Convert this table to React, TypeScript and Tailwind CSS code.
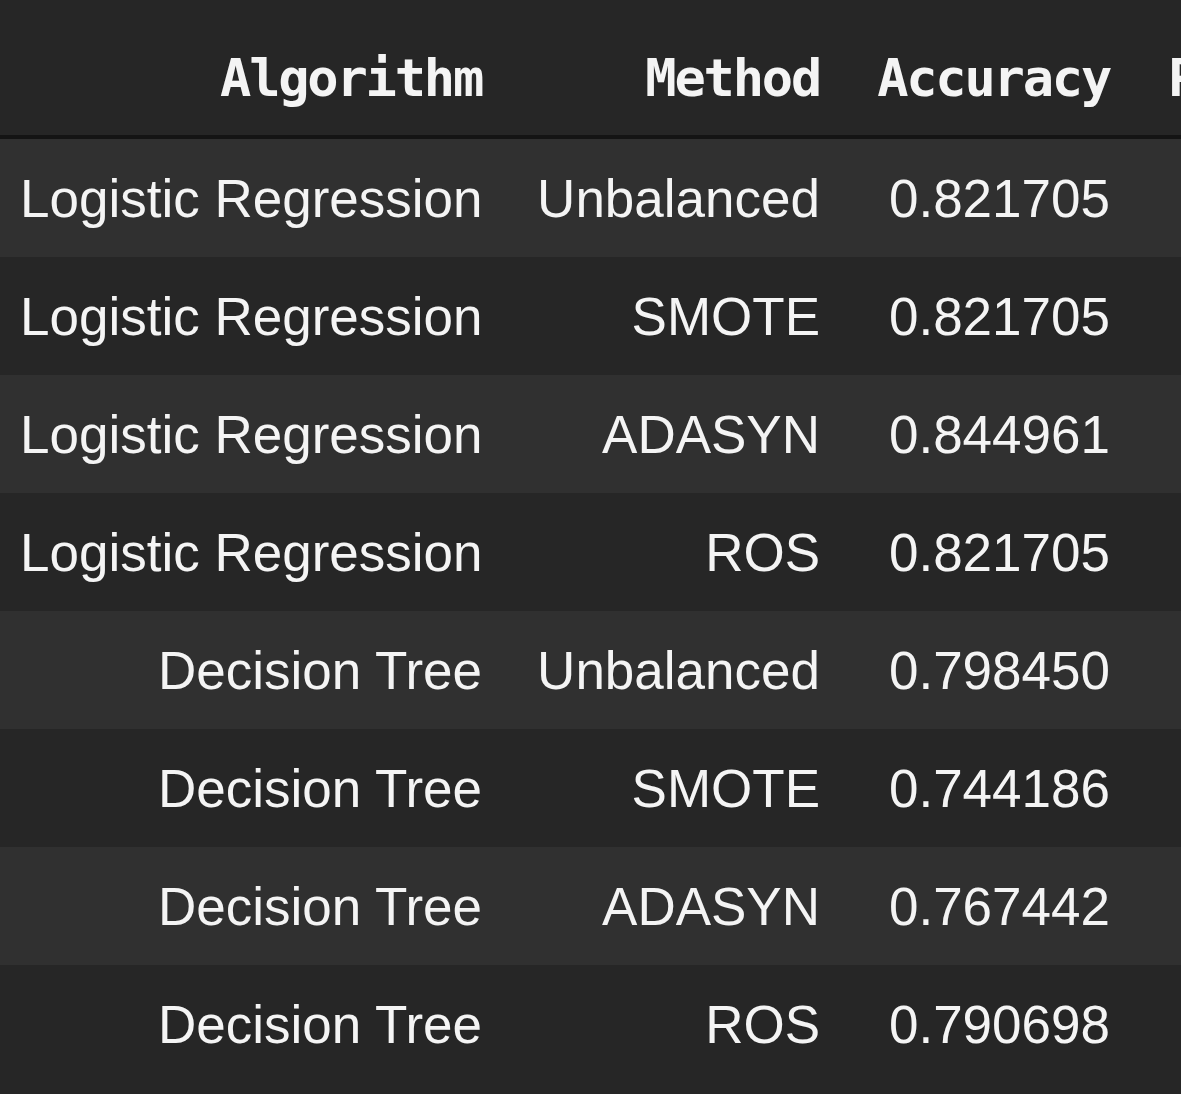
const rows = [
  ["Logistic Regression", "Unbalanced", "0.821705"],
  ["Logistic Regression", "SMOTE", "0.821705"],
  ["Logistic Regression", "ADASYN", "0.844961"],
  ["Logistic Regression", "ROS", "0.821705"],
  ["Decision Tree", "Unbalanced", "0.798450"],
  ["Decision Tree", "SMOTE", "0.744186"],
  ["Decision Tree", "ADASYN", "0.767442"],
  ["Decision Tree", "ROS", "0.790698"],
];

const headers = ["Algorithm", "Method", "Accuracy", "Precision"];

export default function App() {
  return (
    <div className="h-[1094px] w-[1181px] overflow-hidden bg-[#262626] text-[#f4f4f4]">
      {/* header */}
      <div className="grid h-[139px] w-max grid-cols-[509px_338px_290px_320px] border-b-4 border-[#141414]">
        {headers.map((h) => (
          <div
            key={h}
            className="pl-[28px] pr-[27px] pt-[52px] text-right font-['DejaVu_Sans_Mono',monospace] text-[52px] font-bold leading-[52px] tracking-[-2.2px] whitespace-nowrap"
          >
            {h}
          </div>
        ))}
      </div>

      {/* body */}
      {rows.map((r, i) => (
        <div
          key={i}
          className={`grid h-[118px] w-max grid-cols-[509px_338px_290px_320px] items-center font-['Liberation_Sans',Arial,sans-serif] text-[53px] leading-[53px] ${
            i % 2 === 0 ? "bg-[#303030]" : "bg-[#262626]"
          }`}
        >
          {r.map((c, j) => (
            <div key={j} className="pl-[20px] pr-[27px] text-right whitespace-nowrap">
              {c}
            </div>
          ))}
          <div />
        </div>
      ))}
    </div>
  );
}
